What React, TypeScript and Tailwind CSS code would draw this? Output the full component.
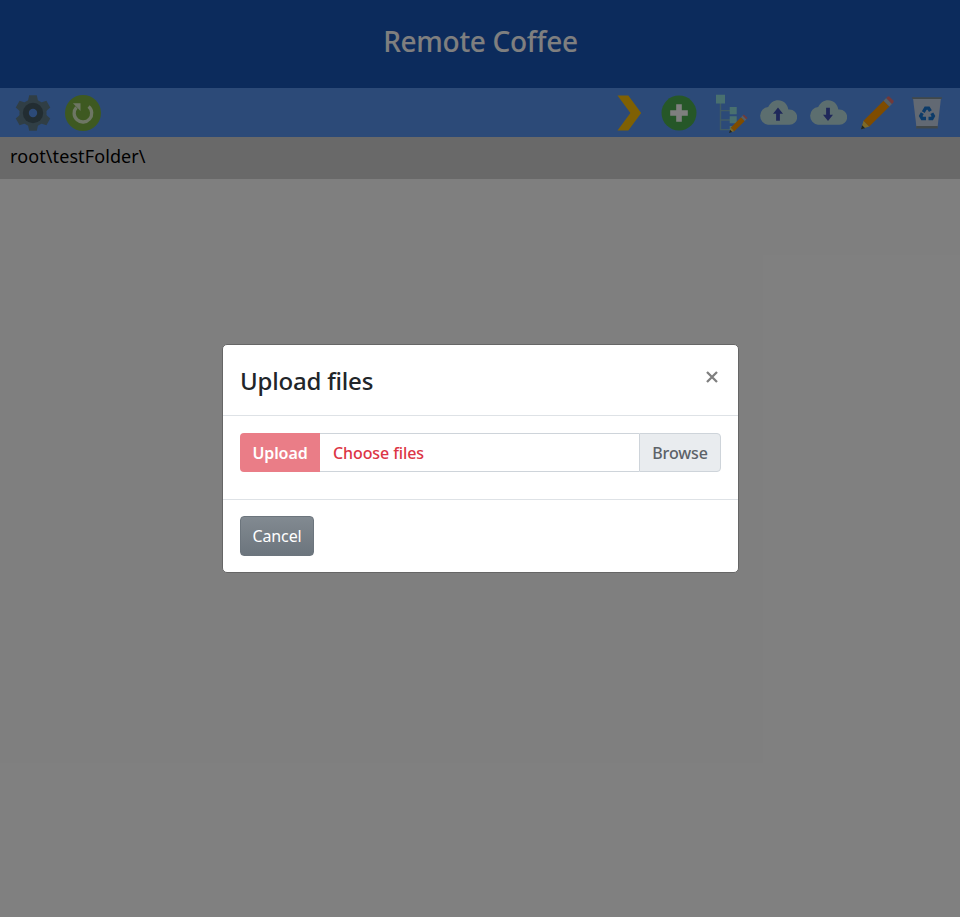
import React from "react";

function Gear() {
  return (
    <svg className="h-9 w-9" viewBox="0 0 36 36">
      <g fill="#607d8b">
        <path id="tooth" d="M14.2 0.3h7.6l1.6 7v21.4l-1.6 7h-7.6l-1.6-7V7.3z" />
        <path d="M14.2 0.3h7.6l1.6 7v21.4l-1.6 7h-7.6l-1.6-7V7.3z" transform="rotate(60 18 18)" />
        <path d="M14.2 0.3h7.6l1.6 7v21.4l-1.6 7h-7.6l-1.6-7V7.3z" transform="rotate(120 18 18)" />
        <circle cx="18" cy="18" r="13.6" />
      </g>
      <circle cx="18" cy="18" r="10.2" fill="#455a64" />
      <circle cx="18" cy="18" r="4.2" fill="#5894f0" />
    </svg>
  );
}

function Refresh() {
  return (
    <svg className="h-9 w-9" viewBox="0 0 36 36">
      <circle cx="18" cy="18" r="18" fill="#7cb342" />
      <path d="M23.6 11.5A8.8 8.8 0 1 1 11.4 12.3" fill="none" stroke="#dcedc8" strokeWidth="3.3" />
      <path d="M7.9 8.3h7.6v7.6z" fill="#dcedc8" />
    </svg>
  );
}

function Chevron() {
  return (
    <svg className="h-9 w-9" viewBox="0 0 36 36">
      <path d="M6.5 0.5H17.3L30.2 18 17.3 35.5H6.5L19.4 18z" fill="#ffc107" />
    </svg>
  );
}

function Plus() {
  return (
    <svg className="h-9 w-9" viewBox="0 0 36 36">
      <circle cx="18" cy="18" r="17.5" fill="#4caf50" />
      <path d="M15.2 9.2h5.6v6h6v5.6h-6v6h-5.6v-6h-6v-5.6h6z" fill="#fff" />
    </svg>
  );
}

function Pencil() {
  return (
    <svg className="h-9 w-9" viewBox="0 0 36 36">
      <path d="M2.2 34l2.3-8.2 5.8 5.8z" fill="#ffd54f" />
      <path d="M2 34.2l1.1-4 3 3z" fill="#37474f" />
      <path d="M4.5 25.8L24.6 5.7l5.8 5.8-20.1 20.1z" fill="#ff9800" />
      <path d="M24.6 5.7l2.6-2.6L33 8.9l-2.6 2.6z" fill="#b0bec5" />
      <path d="M27.2 3.1l1.3-1.3q1-.9 2 0l3.8 3.8q.9 1 0 2L33 8.9z" fill="#e57373" />
    </svg>
  );
}

function Tree() {
  return (
    <svg className="h-10 w-9 overflow-visible" viewBox="0 0 36 40">
      <path d="M9.5 10v26.6h10M9.5 17.6h10M9.5 27h10" fill="none" stroke="#82b6c8" strokeWidth="1.4" />
      <path d="M5 1.8h9v8.8H5zM18.7 14h7v7.2h-7zM18.7 23.3h7v7h-7zM18.7 33h6v4h-6z" fill="#92e1df" />
      <g transform="translate(17.5 21.4) scale(.53)">
        <path d="M2 34l2-9 7 7z" fill="#ffd54f" />
        <path d="M1 35l2-6 4 4z" fill="#37474f" />
        <path d="M4 25L23.7 5.3l7 7L11 32z" fill="#ff9800" />
        <path d="M23.7 5.3l3-3 7 7-3 3z" fill="#b0bec5" />
        <path d="M26.7 2.3L29 0l7 7-2.3 2.3z" fill="#e57373" />
      </g>
    </svg>
  );
}

function Cloud({ down = false }: { down?: boolean }) {
  return (
    <svg className="-mx-px h-9 w-[38px]" viewBox="0 0 38 36">
      <path
        d="M9 29.7A8.9 8.9 0 0 1 9.2 12C11.3 7.7 14.7 5.2 19.2 5.2c5.2 0 9.4 3.9 10.1 9.2l1.2 0A7.6 7.6 0 0 1 30.5 29.7z"
        fill="#b9dcdf"
      />
      <path
        d="M19 12.5l5 6.2h-3.1v7h-3.8v-7H14z"
        fill="#3f51b5"
        transform={down ? "rotate(180 19 19.2)" : undefined}
      />
    </svg>
  );
}

function Recycle() {
  return (
    <svg className="h-9 w-9" viewBox="0 0 36 36">
      <path d="M4 3h28l-3.5 29.5h-21z" fill="#c5d2e6" />
      <path d="M3 2.2h30l-.3 1.7H3.3zM7.2 31h21.6v2.6H7.2z" fill="#829194" />
      <g fill="none" stroke="#1976d2" strokeWidth="3.3">
        <path d="M14.3 17.1l2.3-4h3l1.8 3" />
        <path d="M22.8 18.2l1.6 2.9-1.4 2.4h-3.5" />
        <path d="M17 23.5h-3.8L11.7 21l1.6-2.9" />
      </g>
    </svg>
  );
}

export default function App() {
  return (
    <div className="relative h-[917px] w-[960px] overflow-hidden bg-white font-['Noto_Sans','Open_Sans',sans-serif] text-black">
      <header className="flex h-[88px] items-center justify-center bg-[#1856b8] pb-[7px]">
        <h1 className="pl-px text-[28px] font-medium leading-8 tracking-[-0.3px] text-white">Remote Coffee</h1>
      </header>
      <nav className="flex h-[49px] items-center justify-between bg-[#5894f0] px-[15px]">
        <div className="flex items-center gap-[14px]">
          <Gear />
          <Refresh />
        </div>
        <div className="flex items-center gap-[13.6px]">
          <Chevron />
          <Plus />
          <Tree />
          <Cloud />
          <Cloud down />
          <Pencil />
          <Recycle />
        </div>
      </nav>
      <div className="flex h-[42px] items-center bg-[#d3d3d3] pb-[5px] pl-[10px] text-lg tracking-[0.1px]">root\testFolder\</div>

      <div className="absolute inset-0 flex items-center justify-center bg-black/50">
        <section className="ml-px w-[517px] rounded-[5px] border border-[#666] bg-white text-[#212529]">
          <div className="flex h-[71px] items-start justify-between border-b border-[#dee2e6] px-[17px]">
            <h2 className="pt-[18px] text-2xl font-medium leading-9 tracking-[-0.2px]">Upload files</h2>
            <button className="mr-[3px] mt-[26px]" aria-label="Close">
              <svg className="h-3 w-3" viewBox="0 0 12 12">
                <path d="M1 1l10 10M11 1L1 11" stroke="#7f7f7f" strokeWidth="2.3" />
              </svg>
            </button>
          </div>
          <div className="h-[84px] border-b border-[#dee2e6] px-[17px] pt-[17px]">
            <div className="flex h-[39px] text-base font-medium tracking-[-0.1px]">
              <button className="w-20 rounded-l bg-[#ea7d87] pt-px font-semibold text-white">Upload</button>
              <div className="flex flex-1 items-center border-y border-[#ced4da] pl-[13px] pt-px text-[#dc3545]">Choose files</div>
              <div className="flex w-[82px] items-center justify-center rounded-r border border-[#ced4da] bg-[#e9ecef] pt-px text-[#5c6268]">Browse</div>
            </div>
          </div>
          <div className="h-[72px] px-[17px] pt-4">
            <button className="h-10 w-[74px] rounded border border-[#6c757d] bg-linear-to-b from-[#828a91] to-[#6c757d] text-base tracking-[-0.1px] text-white">Cancel</button>
          </div>
        </section>
      </div>
    </div>
  );
}
